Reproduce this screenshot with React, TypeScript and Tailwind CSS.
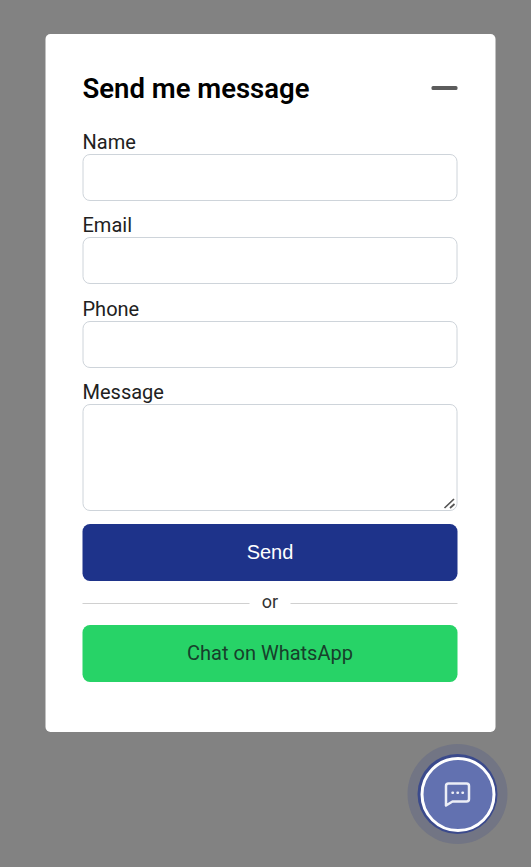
function Field({ label }: { label: string }) {
  return (
    <label className="mb-[12.33px] block text-[20px] leading-6 text-[#212121]">
      {label}
      <input className="block h-[47px] w-full rounded-[7.5px] border border-[#ced4da] bg-white px-3 outline-none" />
    </label>
  );
}

export default function App() {
  return (
    <div className="h-[867px] w-[531px] overflow-hidden bg-[#828282] pt-[34px] font-['Roboto',sans-serif]">
      <main className="ml-[46px] h-[698px] w-[450px] -translate-x-[0.5px] rounded-[5px] bg-white px-[37px] pt-9">
        <div className="mr-px">
          <header className="flex h-9 items-center justify-between">
            <h1 className="pt-[2px] text-[27.5px] leading-9 font-semibold text-black">Send me message</h1>
            <button aria-label="Minimize" className="h-1 w-[26px] rounded-[1.5px] bg-[#5c5c5c]" />
          </header>
          <form className="pt-6">
            <Field label="Name" />
            <Field label="Email" />
            <Field label="Phone" />
            <label className="block text-[20px] leading-6 text-[#212121]">
              Message
              <span className="relative block">
                <textarea className="block h-[107px] w-full resize-none rounded-[7.5px] border border-[#ced4da] bg-white outline-none" />
                <svg className="absolute right-[2px] bottom-[2px]" width="12" height="11" viewBox="0 0 12 11" stroke="#555" strokeWidth="1.7" fill="none">
                  <path d="M1 10 10.500 1M6.500 10 11 6" />
                </svg>
              </span>
            </label>
            <button type="button" className="mt-[13px] block h-[57px] w-full rounded-[7.5px] bg-[#1e338a] font-['Liberation_Sans',Arial,sans-serif] text-[20px] text-white">
              Send
            </button>
          </form>
          <div className="flex h-11 items-center gap-3 text-[18px] leading-6 text-[#333]">
            <span className="mt-px h-px flex-1 bg-[#d0d0d0]" />
            <span className="pb-[2px]">or</span>
            <span className="mt-px h-px flex-1 bg-[#d0d0d0]" />
          </div>
          <button className="block h-[57px] w-full rounded-[7.5px] bg-[#27d367] text-[20px] text-[#17402b]">Chat on WhatsApp</button>
        </div>
      </main>
      <button aria-label="Open chat" className="mt-3 ml-[408px] flex size-[100px] -translate-x-[0.5px] items-center justify-center rounded-full bg-[#727584]">
        <span className="flex size-20 items-center justify-center rounded-full bg-[#3b4a8c]">
          <span className="flex size-[75px] items-center justify-center rounded-full border-3 border-white bg-[#6271b0]">
            <svg width="28" height="28" viewBox="0 0 28 28" fill="none" stroke="#eceef6" strokeWidth="2.500" strokeLinejoin="round" strokeLinecap="round">
              <path d="M2.500 25.500V6Q2.500 3.500 5 3.500H23Q25.500 3.500 25.500 6V19Q25.500 21.500 23 21.500H9Z" />
              <path d="M9 12.800h.4M14 12.800h.4M19 12.800h.4" />
            </svg>
          </span>
        </span>
      </button>
    </div>
  );
}
